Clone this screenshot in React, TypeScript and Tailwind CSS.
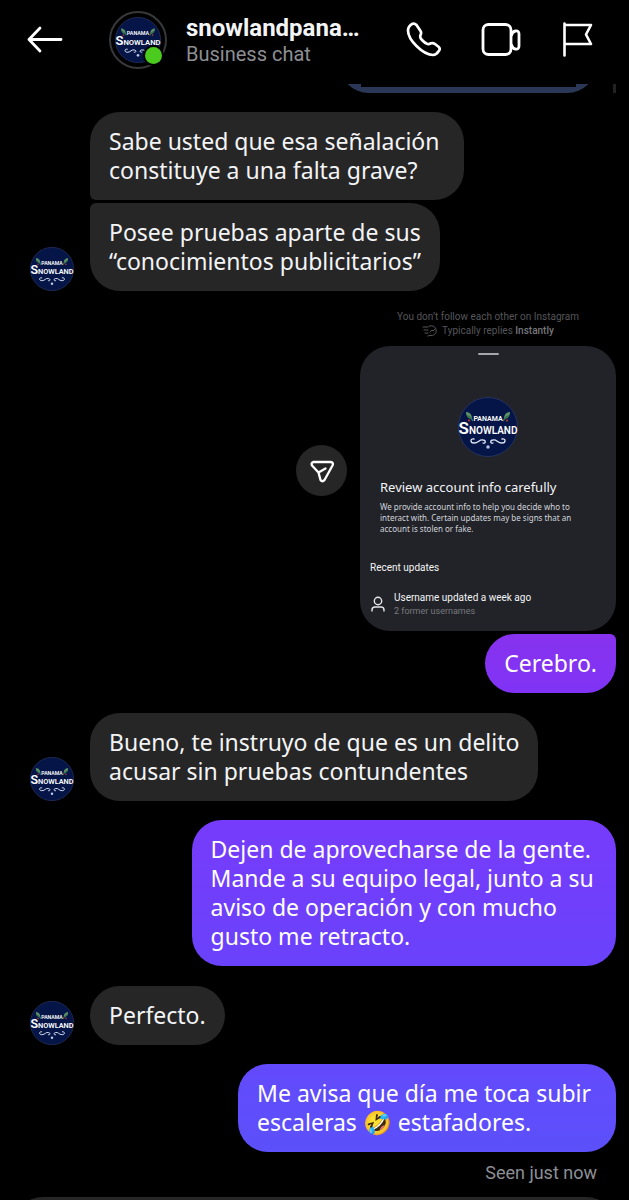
import type { ReactNode } from "react";
import clsx from "clsx";

interface BubbleProps {
  children: ReactNode;
  className?: string;
}

function Logo({ className }: { className?: string }) {
  return (
    <svg viewBox="0 0 60 60" className={className} role="img" aria-label="Panama Snowland">
      <circle cx="30" cy="30" r="29.5" fill="#051548" stroke="#26335c" strokeWidth="1" />
      <path d="M8 15c4 0 6 3 6 7-4 0-6-3-6-7zM52 15c-4 0-6 3-6 7 4 0 6-3 6-7z" fill="#5f9468" />
      <path d="M9 19c2 0 4 2 6 5M51 19c-2 0-4 2-6 5" fill="none" stroke="#36704a" strokeWidth="1.5" />
      <circle cx="11" cy="23.5" r="1.1" fill="#b83a3c" />
      <circle cx="49" cy="23.5" r="1.1" fill="#b83a3c" />
      <g fill="#fff" fontFamily="Roboto, sans-serif" fontWeight="600">
        <text x="30" y="24" fontSize="7" textAnchor="middle">
          PANAMA
        </text>
        <text x="30" y="37" fontSize="10" textAnchor="middle">
          <tspan fontSize="17">S</tspan>NOWLAND
        </text>
      </g>
      <path
        d="M16 42c-4-1-4 4 0 4 5 0 5-4 9-3 3 0 3 4 0 3M44 42c4-1 4 4 0 4-5 0-5-4-9-3-3 0-3 4 0 3"
        fill="none"
        stroke="#dfe5f5"
        strokeWidth="1.3"
        strokeLinecap="round"
      />
      <circle cx="30" cy="50" r="1.7" fill="#b9c7e8" />
    </svg>
  );
}

function Received({ children, className }: BubbleProps) {
  return (
    <div
      className={clsx(
        "whitespace-pre bg-[#262626] px-[19px] py-[15px] font-['Noto_Sans',sans-serif] text-[23px] leading-[29px] text-gray-100",
        className ?? "rounded-[30px]"
      )}
    >
      {children}
    </div>
  );
}

function Sent({ children, className }: BubbleProps) {
  return (
    <div
      className={clsx(
        "self-end whitespace-pre px-[19px] py-[15px] font-['Noto_Sans',sans-serif] text-[23px] leading-[29px] text-white",
        className
      )}
    >
      {children}
    </div>
  );
}

function ReceivedRow({ children }: { children: ReactNode }) {
  return (
    <div className="flex items-end gap-4">
      <Logo className="size-11 shrink-0" />
      <div className="flex flex-col items-start gap-[3px]">{children}</div>
    </div>
  );
}

function Header() {
  return (
    <header className="flex h-[84px] shrink-0 items-center pb-1 pl-[26px] pr-9">
      <button type="button" aria-label="Back">
        <svg viewBox="0 0 38 30" className="h-[30px] w-[38px]" fill="none" stroke="#fff" strokeWidth="2.8" strokeLinecap="round" strokeLinejoin="round">
          <path d="M35 14.500H3M14 3 3 14.500 14 26" />
        </svg>
      </button>
      <div className="relative ml-[45px] flex size-[58px] shrink-0 items-center justify-center rounded-full border-2 border-[#36383a]">
        <Logo className="size-[46px]" />
        <span className="absolute bottom-[3px] right-[3px] size-[17px] rounded-full bg-[#4bcb1d] ring-2 ring-black" />
      </div>
      <div className="ml-[19px] min-w-0 flex-1">
        <h1 className="truncate text-2xl font-bold leading-7 text-gray-100">snowlandpana…</h1>
        <p className="text-xl leading-6 text-[#8d8f94]">Business chat</p>
      </div>
      <div className="flex shrink-0 items-center gap-10">
        <button type="button" aria-label="Audio call">
          <svg viewBox="0 0 36 36" className="size-9" fill="none" stroke="#fff" strokeWidth="2.7" strokeLinecap="round" strokeLinejoin="round">
            <path d="M7.500 1.800Q9.500 1 11.500 3L15.500 9Q16.700 11 15.500 13Q14.500 15.500 17 18Q20 21.300 22.500 22Q24 22.400 26 21.300Q28 20.500 30 22L33.500 24.800Q35.500 26.500 34 28.800Q31.500 32.800 28 33C18 33 3 18 3 8.500Q3.200 4 7.500 1.800Z" />
          </svg>
        </button>
        <button type="button" aria-label="Video call">
          <svg viewBox="0 0 40 36" className="h-9 w-10" fill="none" stroke="#fff" strokeWidth="2.8" strokeLinecap="round" strokeLinejoin="round">
            <rect x="2" y="2.500" width="28" height="30" rx="5.500" />
            <path d="M30.500 13Q31.500 9.500 34.500 9Q38 8.500 38 12V24Q38 27.500 34.500 27Q31.500 26.500 30.500 23" />
          </svg>
        </button>
        <button type="button" aria-label="Report">
          <svg viewBox="0 0 32 36" className="h-9 w-8" fill="none" stroke="#fff" strokeWidth="2.6" strokeLinecap="round" strokeLinejoin="round">
            <path d="M3.500 1.500V33.500M3.500 3H30L25 12.500 30 22H3.500" />
          </svg>
        </button>
      </div>
    </header>
  );
}

// Screenshot of the account info sheet, shared as an attachment
function SharedSheet() {
  return (
    <div className="mt-[19px] flex items-center gap-[13px] self-end">
      <button
        type="button"
        aria-label="Forward"
        className="flex size-[51px] shrink-0 items-center justify-center rounded-full bg-[#262626]"
      >
        <svg viewBox="0 0 24 24" className="size-6" fill="none" stroke="#fff" strokeWidth="2.3" strokeLinecap="round" strokeLinejoin="round">
          <path d="M3.500 3H20.500Q24 3.500 22.500 6.500L14.500 21Q12.500 23.500 10.500 21L8.500 13.500 2 6.500Q0.800 3.500 3.500 3ZM8.500 13.500 15.500 9.500" />
        </svg>
      </button>
      <div className="w-64">
        <div className="pb-2 text-center text-[10px] leading-[14px] text-[#55565a]">
          <p>You don’t follow each other on Instagram</p>
          <p className="flex items-center justify-center gap-1">
            <svg viewBox="0 0 16 12" className="h-3 w-4" fill="none" stroke="#55565a" strokeLinecap="round">
              <path d="M7 1.200A5 5 0 1 1 8 10.500L6 11M1 2h5M2 5h4M3 8h3M8 7l2-2 1 1 2-2" />
            </svg>
            <span>
              Typically replies <span className="font-medium text-[#77787c]">Instantly</span>
            </span>
          </p>
        </div>
        <div className="flex flex-col rounded-[30px] bg-[#222328] px-[10px] pb-[14px] pt-[7px] text-gray-100">
          <span className="h-[2px] w-[21px] self-center rounded-full bg-[#a5a6ab]" />
          <Logo className="mt-[42px] size-[60px] self-center" />
          <div className="mt-5 px-[10px] font-['Noto_Sans',sans-serif]">
            <h2 className="text-[13px] leading-5">Review account info carefully</h2>
            <p className="mt-1 whitespace-pre text-[8px] leading-[11px] text-gray-300">
              {"We provide account info to help you decide who to\ninteract with. Certain updates may be signs that an\naccount is stolen or fake."}
            </p>
          </div>
          <h3 className="mt-[27px] text-[10px] leading-[14px]">Recent updates</h3>
          <div className="mt-4 flex items-center gap-2">
            <svg viewBox="0 0 16 16" className="size-4" fill="none" stroke="#e5e7eb" strokeWidth="1.400" strokeLinecap="round">
              <circle cx="8" cy="5" r="3.700" />
              <path d="M2 15v-1q0-3 3-3h6q3 0 3 3v1" />
            </svg>
            <div>
              <p className="text-[10px] leading-[14px]">Username updated a week ago</p>
              <p className="text-[9px] leading-3 text-[#77797e]">2 former usernames</p>
            </div>
          </div>
        </div>
      </div>
    </div>
  );
}

export default function App() {
  return (
    <div className="flex h-screen flex-col overflow-hidden bg-black font-[Roboto,sans-serif]">
      <Header />
      <main className="flex shrink-0 flex-col pl-[30px] pr-[13px]">
        {/* Tail of the previous attachment, scrolled under the header */}
        <div className="flex h-[9px] justify-end gap-4 overflow-hidden">
          <div className="flex h-16 w-[258px] justify-center self-end rounded-b-[30px] bg-[#2b3757]">
            <div className="h-[58px] w-[215px] bg-black" />
          </div>
          <span className="w-[3px] bg-[#222]" />
        </div>
        <div className="mt-[19px]">
          <ReceivedRow>
            <Received className="rounded-[30px] rounded-bl-[6px]">
              {"Sabe usted que esa señalación \nconstituye a una falta grave?"}
            </Received>
            <Received className="rounded-[30px] rounded-tl-[6px]">
              {"Posee pruebas aparte de sus\n“conocimientos publicitarios”"}
            </Received>
          </ReceivedRow>
        </div>
        <SharedSheet />
        <Sent className="mt-[3px] rounded-[30px] rounded-tr-[6px] bg-linear-to-b from-[#8732ee] to-[#8033f5]">Cerebro.</Sent>
        <div className="mt-5">
          <ReceivedRow>
            <Received>{"Bueno, te instruyo de que es un delito\nacusar sin pruebas contundentes"}</Received>
          </ReceivedRow>
        </div>
        <Sent className="mt-[19px] rounded-[30px] bg-linear-to-b from-[#763bfb] to-[#6a42fc]">
          {"Dejen de aprovecharse de la gente. \nMande a su equipo legal, junto a su\naviso de operación y con mucho\ngusto me retracto."}
        </Sent>
        <div className="mt-5">
          <ReceivedRow>
            <Received>Perfecto.</Received>
          </ReceivedRow>
        </div>
        <Sent className="mt-[19px] rounded-[30px] bg-linear-to-b from-[#634afc] to-[#5b50fa]">
          {"Me avisa que día me toca subir \nescaleras 🤣 estafadores."}
        </Sent>
        <p className="mr-[19px] mt-[9px] self-end text-lg leading-6 text-[#8d8f94]">Seen just now</p>
      </main>
      <div className="mx-[13px] mt-3 h-[60px] shrink-0 rounded-[30px] bg-[#262626]" />
    </div>
  );
}
